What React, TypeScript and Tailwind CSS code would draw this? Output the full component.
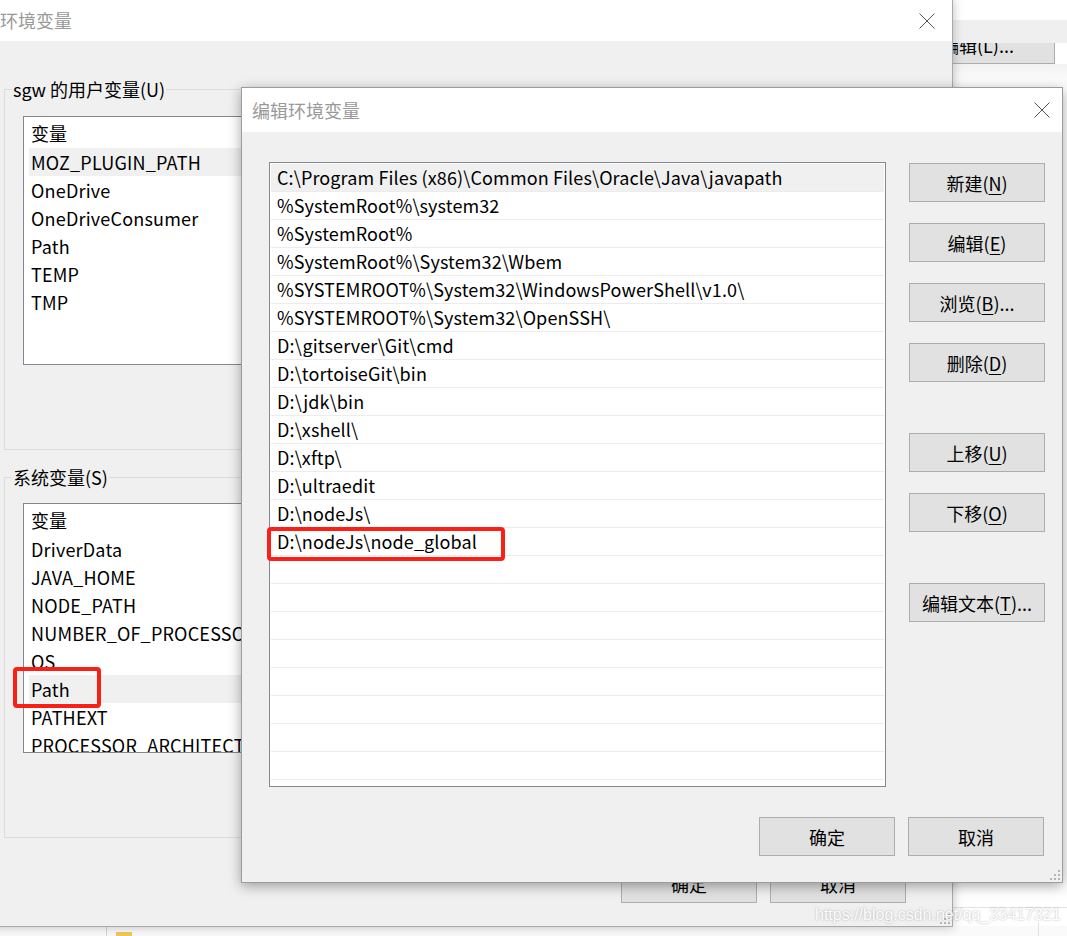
import React from "react";

const FONT = "font-['Noto_Sans_CJK_SC','Noto_Sans',sans-serif]";

function Btn({ children, className = "" }: { children: React.ReactNode; className?: string }) {
  return (
    <div
      className={`w-[136px] h-[39px] bg-[#e1e1e1] border border-[#adadad] flex items-center justify-center text-[18px] text-black leading-none ${className}`}
    >
      {children}
    </div>
  );
}

function Mn({ c }: { c: string }) {
  return <span className="underline underline-offset-[3px] decoration-1">{c}</span>;
}

function CloseX() {
  return (
    <svg width="16" height="16" viewBox="0 0 16 16" className="block">
      <path d="M0.5 0.5 L15.5 15.5 M15.5 0.5 L0.5 15.5" stroke="#555" strokeWidth="1" fill="none" />
    </svg>
  );
}

function Grip() {
  return (
    <svg width="10" height="10" viewBox="0 0 10 10" className="block">
      <rect x="8" y="0" width="2" height="2" fill="#b5b5b5" />
      <rect x="4" y="4" width="2" height="2" fill="#b5b5b5" />
      <rect x="8" y="4" width="2" height="2" fill="#b5b5b5" />
      <rect x="0" y="8" width="2" height="2" fill="#b5b5b5" />
      <rect x="4" y="8" width="2" height="2" fill="#b5b5b5" />
      <rect x="8" y="8" width="2" height="2" fill="#b5b5b5" />
    </svg>
  );
}

const userVars = ["MOZ_PLUGIN_PATH", "OneDrive", "OneDriveConsumer", "Path", "TEMP", "TMP"];
const sysVars = [
  "DriverData",
  "JAVA_HOME",
  "NODE_PATH",
  "NUMBER_OF_PROCESSORS",
  "OS",
  "Path",
  "PATHEXT",
  "PROCESSOR_ARCHITECTURE",
];

const paths = [
  "C:\\Program Files (x86)\\Common Files\\Oracle\\Java\\javapath",
  "%SystemRoot%\\system32",
  "%SystemRoot%",
  "%SystemRoot%\\System32\\Wbem",
  "%SYSTEMROOT%\\System32\\WindowsPowerShell\\v1.0\\",
  "%SYSTEMROOT%\\System32\\OpenSSH\\",
  "D:\\gitserver\\Git\\cmd",
  "D:\\tortoiseGit\\bin",
  "D:\\jdk\\bin",
  "D:\\xshell\\",
  "D:\\xftp\\",
  "D:\\ultraedit",
  "D:\\nodeJs\\",
  "D:\\nodeJs\\node_global",
];

function VarList({ items, selected, height }: { items: string[]; selected: number; height: number }) {
  return (
    <div
      className="w-[900px] bg-white border border-[#828790] overflow-hidden pl-[5px] pt-px"
      style={{ height }}
    >
      <div className="h-[30px] flex items-center pl-[2px] text-[18px]">变量</div>
      {items.map((v, i) => (
        <div
          key={i}
          className={`h-[28px] flex items-center pl-[2px] text-[18px] tracking-[0.2px] whitespace-nowrap ${i === selected ? "bg-[#f0f0f0]" : ""}`}
        >
          {v}
        </div>
      ))}
    </div>
  );
}

function GroupBox({ label, children, height }: { label: string; children: React.ReactNode; height: number }) {
  return (
    <div className="relative border border-[#dcdcdc] w-[930px]" style={{ height }}>
      <div className="absolute left-[7px] top-[-14px] px-px bg-[#f0f0f0] text-[18px] leading-[26px]">{label}</div>
      {children}
    </div>
  );
}

export default function App() {
  const emptyRows = 22 - paths.length;
  return (
    <div className={`relative w-[1067px] h-[936px] overflow-hidden bg-white text-black ${FONT}`}>
      {/* far background window (top right) */}
      <div className="absolute left-[900px] top-[26px] w-[155px] h-[38px] bg-[#e1e1e1] border border-[#adadad] flex items-center pl-[40px] text-[18px]">
        编辑(L)...
      </div>
      <div className="absolute left-[940px] top-[20px] w-[127px] h-[23px] bg-[#efefef]" />
      <div className="absolute left-[940px] top-[64px] w-[127px] h-[23px] bg-gradient-to-b from-[#f2f2f2] to-white" />

      {/* bottom strip (explorer) */}
      <div className="absolute left-0 top-[926px] w-[1067px] h-[10px] bg-[#fafafa]">
        <div className="absolute left-[106px] top-0 w-px h-[10px] bg-[#d6d6d6]" />
        <div className="absolute left-[116px] top-[6px] w-[16px] h-[4px] bg-[#f1c760]" />
      </div>
      {/* right lower background lines */}
      <div className="absolute left-[952px] top-[907px] w-[115px] h-px bg-[#e2e2e2]" />
      <div className="absolute left-[1038px] top-[922px] w-px h-[14px] bg-[#e2e2e2]" />

      {/* back dialog: 环境变量 */}
      <div className="absolute left-[-12px] top-[-1px] w-[965px] h-[928px] border border-[#aaaaaa] bg-[#f0f0f0] shadow-[0_0_10px_rgba(0,0,0,0.25)] flex flex-col">
        <div className="h-[41px] bg-white flex items-center justify-between pl-[11px] pr-[17px] shrink-0">
          <span className="text-[18px] text-[#999]">环境变量</span>
          <CloseX />
        </div>
        <div className="flex flex-col pl-[15px] pt-[48px]">
          <GroupBox label="sgw 的用户变量(U)" height={361}>
            <div className="pl-[18px] pt-[26px]">
              <VarList items={userVars} selected={0} height={249} />
            </div>
          </GroupBox>
          <div className="h-[27px]" />
          <GroupBox label="系统变量(S)" height={361}>
            <div className="pl-[18px] pt-[25px]">
              <VarList items={sysVars} selected={5} height={250} />
            </div>
          </GroupBox>
          <div className="flex gap-[13px] pl-[617px] pt-[26px]">
            <Btn>确定</Btn>
            <Btn>取消</Btn>
          </div>
        </div>
        <div className="absolute right-[2px] bottom-[2px]">
          <Grip />
        </div>
      </div>

      {/* red highlight on Path in back dialog */}
      <div className="absolute left-[13px] top-[667px] w-[88px] h-[41px] border-[4px] border-[#fb2015] rounded-[4px]" />

      {/* front dialog: 编辑环境变量 */}
      <div className="absolute left-[241px] top-[87px] w-[822px] h-[796px] border border-[#9c9c9c] bg-[#f0f0f0] shadow-[0_3px_12px_rgba(0,0,0,0.35)] flex flex-col">
        <div className="h-[44px] bg-white flex items-center justify-between pl-[10px] pr-[12px] shrink-0">
          <span className="text-[18px] text-[#999]">编辑环境变量</span>
          <CloseX />
        </div>
        <div className="flex flex-col pl-[27px] pt-[30px]">
          <div className="flex gap-[23px]">
            <div className="w-[617px] h-[625px] bg-white border border-[#828790] p-px overflow-hidden flex flex-col">
              {paths.map((p, i) => (
                <div
                  key={i}
                  className={`h-[28px] shrink-0 flex items-center pl-[6px] text-[18px] tracking-[0.12px] whitespace-nowrap border-b border-[#ececec] ${i === 0 ? "bg-[#f0f0f0]" : ""}`}
                >
                  {p}
                </div>
              ))}
              {Array.from({ length: emptyRows }).map((_, i) => (
                <div key={"e" + i} className="h-[28px] shrink-0 border-b border-[#ececec]" />
              ))}
            </div>
            <div className="flex flex-col pt-px">
              <Btn>
                新建(<Mn c="N" />)
              </Btn>
              <Btn className="mt-[21px]">
                编辑(<Mn c="E" />)
              </Btn>
              <Btn className="mt-[21px]">
                浏览(<Mn c="B" />)...
              </Btn>
              <Btn className="mt-[21px]">
                删除(<Mn c="D" />)
              </Btn>
              <Btn className="mt-[51px]">
                上移(<Mn c="U" />)
              </Btn>
              <Btn className="mt-[21px]">
                下移(<Mn c="O" />)
              </Btn>
              <Btn className="mt-[51px]">
                编辑文本(<Mn c="T" />)...
              </Btn>
            </div>
          </div>
          <div className="flex gap-[13px] pl-[490px] pt-[30px]">
            <Btn>确定</Btn>
            <Btn>取消</Btn>
          </div>
        </div>
        <div className="absolute right-[2px] bottom-[2px]">
          <Grip />
        </div>
      </div>

      {/* red highlight on node_global */}
      <div className="absolute left-[267px] top-[527px] w-[238px] h-[34px] border-[4px] border-[#fb2015] rounded-[4px]" />

      {/* watermark */}
      <div className="absolute left-[815px] top-[905px] text-[16px] leading-[20px] text-white font-['Liberation_Sans',sans-serif] [text-shadow:0_0_2px_rgba(0,0,0,0.35)] opacity-90">
        https://blog.csdn.net/qq_33417321
      </div>
    </div>
  );
}
